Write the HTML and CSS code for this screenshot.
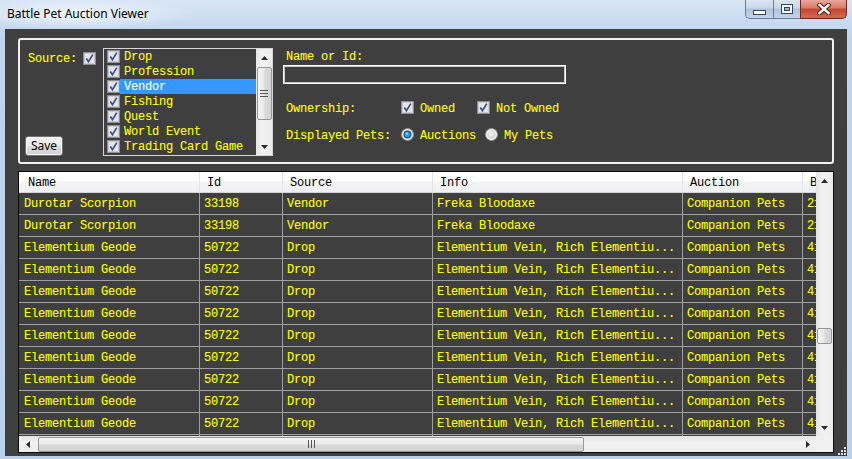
FILE: index.html
```html
<!DOCTYPE html>
<html>
<head>
<meta charset="utf-8">
<title>Battle Pet Auction Viewer</title>
<link rel="stylesheet" href="styles.css">
</head>
<body>
<div class="window">
  <div class="titlebar">
    <div class="title">Battle Pet Auction Viewer</div>
    <div class="controls">
      <div class="cbtn min"><svg width="13" height="5" viewBox="0 0 13 5"><rect x="0.5" y="0.5" width="12" height="4" fill="#fff" stroke="#34465e"/></svg></div>
      <div class="cbtn max"><svg width="12" height="10" viewBox="0 0 12 10"><rect x="0.5" y="0.5" width="11" height="9" fill="#fff" stroke="#34465e"/><rect x="3.5" y="3.5" width="5" height="3" fill="#9fb3cc" stroke="#34465e"/></svg></div>
      <div class="cbtn close"><svg width="14" height="12" viewBox="0 0 14 12"><path d="M2.5 2 L11.5 10 M11.5 2 L2.5 10" stroke="#4a1810" stroke-width="4.4" stroke-linecap="square"/><path d="M2.5 2 L11.5 10 M11.5 2 L2.5 10" stroke="#ffffff" stroke-width="2.4" stroke-linecap="square"/></svg></div>
    </div>
  </div>

  <div class="client">
    <div class="filters">
      <div class="source-col">
        <div class="source-row">
          <span class="lbl">Source:</span>
          <svg class="cb" width="13" height="13" viewBox="0 0 13 13"><rect x="0.5" y="0.5" width="12" height="12" fill="#f4f4f4" stroke="#8e8f8f"/><rect x="1.5" y="1.5" width="10" height="10" fill="#e4e6ea" stroke="#c9ccd2"/><path d="M3.3 6.6 L5.4 9.6 L9.8 2.6" fill="none" stroke="#3b4f8a" stroke-width="1.7"/></svg>
        </div>
        <button class="save">Save</button>
      </div>

      <div class="listbox">
        <ul class="items">
          <li class="item"><svg class="cb" width="13" height="13" viewBox="0 0 13 13"><rect x="0.5" y="0.5" width="12" height="12" fill="#f4f4f4" stroke="#8e8f8f"/><rect x="1.5" y="1.5" width="10" height="10" fill="#e4e6ea" stroke="#c9ccd2"/><path d="M3.3 6.6 L5.4 9.6 L9.8 2.6" fill="none" stroke="#3b4f8a" stroke-width="1.7"/></svg><span>Drop</span></li>
          <li class="item"><svg class="cb" width="13" height="13" viewBox="0 0 13 13"><rect x="0.5" y="0.5" width="12" height="12" fill="#f4f4f4" stroke="#8e8f8f"/><rect x="1.5" y="1.5" width="10" height="10" fill="#e4e6ea" stroke="#c9ccd2"/><path d="M3.3 6.6 L5.4 9.6 L9.8 2.6" fill="none" stroke="#3b4f8a" stroke-width="1.7"/></svg><span>Profession</span></li>
          <li class="item sel"><svg class="cb" width="13" height="13" viewBox="0 0 13 13"><rect x="0.5" y="0.5" width="12" height="12" fill="#f4f4f4" stroke="#8e8f8f"/><rect x="1.5" y="1.5" width="10" height="10" fill="#e4e6ea" stroke="#c9ccd2"/><path d="M3.3 6.6 L5.4 9.6 L9.8 2.6" fill="none" stroke="#3b4f8a" stroke-width="1.7"/></svg><span>Vendor</span></li>
          <li class="item"><svg class="cb" width="13" height="13" viewBox="0 0 13 13"><rect x="0.5" y="0.5" width="12" height="12" fill="#f4f4f4" stroke="#8e8f8f"/><rect x="1.5" y="1.5" width="10" height="10" fill="#e4e6ea" stroke="#c9ccd2"/><path d="M3.3 6.6 L5.4 9.6 L9.8 2.6" fill="none" stroke="#3b4f8a" stroke-width="1.7"/></svg><span>Fishing</span></li>
          <li class="item"><svg class="cb" width="13" height="13" viewBox="0 0 13 13"><rect x="0.5" y="0.5" width="12" height="12" fill="#f4f4f4" stroke="#8e8f8f"/><rect x="1.5" y="1.5" width="10" height="10" fill="#e4e6ea" stroke="#c9ccd2"/><path d="M3.3 6.6 L5.4 9.6 L9.8 2.6" fill="none" stroke="#3b4f8a" stroke-width="1.7"/></svg><span>Quest</span></li>
          <li class="item"><svg class="cb" width="13" height="13" viewBox="0 0 13 13"><rect x="0.5" y="0.5" width="12" height="12" fill="#f4f4f4" stroke="#8e8f8f"/><rect x="1.5" y="1.5" width="10" height="10" fill="#e4e6ea" stroke="#c9ccd2"/><path d="M3.3 6.6 L5.4 9.6 L9.8 2.6" fill="none" stroke="#3b4f8a" stroke-width="1.7"/></svg><span>World Event</span></li>
          <li class="item"><svg class="cb" width="13" height="13" viewBox="0 0 13 13"><rect x="0.5" y="0.5" width="12" height="12" fill="#f4f4f4" stroke="#8e8f8f"/><rect x="1.5" y="1.5" width="10" height="10" fill="#e4e6ea" stroke="#c9ccd2"/><path d="M3.3 6.6 L5.4 9.6 L9.8 2.6" fill="none" stroke="#3b4f8a" stroke-width="1.7"/></svg><span>Trading Card Game</span></li>
        </ul>
        <div class="lscroll">
          <div class="arrow"><svg width="7" height="4" viewBox="0 0 7 4"><path d="M0 4 L3.5 0 L7 4 Z" fill="#2b2b2b"/></svg></div>
          <div class="thumb-v">
            <svg width="8" height="7" viewBox="0 0 8 7"><path d="M0 0.5 H8 M0 3.5 H8 M0 6.5 H8" stroke="#555" stroke-width="1"/></svg>
          </div>
          <div class="spacer"></div>
          <div class="arrow"><svg width="7" height="4" viewBox="0 0 7 4"><path d="M0 0 L3.5 4 L7 0 Z" fill="#2b2b2b"/></svg></div>
        </div>
      </div>

      <div class="right-col">
        <div class="lbl name-lbl">Name or Id:</div>
        <div class="textbox"></div>
        <div class="opt-row first">
          <span class="opt-label">Ownership:</span>
          <svg class="cb" width="13" height="13" viewBox="0 0 13 13"><rect x="0.5" y="0.5" width="12" height="12" fill="#f4f4f4" stroke="#8e8f8f"/><rect x="1.5" y="1.5" width="10" height="10" fill="#e4e6ea" stroke="#c9ccd2"/><path d="M3.3 6.6 L5.4 9.6 L9.8 2.6" fill="none" stroke="#3b4f8a" stroke-width="1.7"/></svg>
          <span class="opt-text">Owned</span>
          <svg class="cb gap-owned" width="13" height="13" viewBox="0 0 13 13"><rect x="0.5" y="0.5" width="12" height="12" fill="#f4f4f4" stroke="#8e8f8f"/><rect x="1.5" y="1.5" width="10" height="10" fill="#e4e6ea" stroke="#c9ccd2"/><path d="M3.3 6.6 L5.4 9.6 L9.8 2.6" fill="none" stroke="#3b4f8a" stroke-width="1.7"/></svg>
          <span class="opt-text">Not Owned</span>
        </div>
        <div class="opt-row second">
          <span class="opt-label">Displayed Pets:</span>
          <svg class="rb" width="13" height="13" viewBox="0 0 13 13"><circle cx="6.5" cy="6.5" r="6" fill="#e9e9e9" stroke="#8e8f8f"/><circle cx="6.5" cy="6.5" r="4" fill="#0f5e9e"/><circle cx="6.5" cy="6.5" r="2.6" fill="#2a9ae0"/><circle cx="5.7" cy="5.6" r="1.1" fill="#bfe6ff"/></svg>
          <span class="opt-text">Auctions</span>
          <svg class="rb gap-auct" width="13" height="13" viewBox="0 0 13 13"><circle cx="6.5" cy="6.5" r="6" fill="#f2f2f2" stroke="#8e8f8f"/><circle cx="6.5" cy="6.5" r="4.2" fill="#d8d8d8"/><circle cx="6" cy="5.8" r="2.6" fill="#ececec"/></svg>
          <span class="opt-text">My Pets</span>
        </div>
      </div>
    </div>

    <div class="grid">
      <div class="view">
        <div class="row head">
          <div class="cell">Name</div><div class="cell">Id</div><div class="cell">Source</div><div class="cell">Info</div><div class="cell">Auction</div><div class="cell">Buyout</div>
        </div>
        <div class="row"><div class="cell">Durotar Scorpion</div><div class="cell">33198</div><div class="cell">Vendor</div><div class="cell">Freka Bloodaxe</div><div class="cell">Companion Pets</div><div class="cell">2100</div></div>
        <div class="row"><div class="cell">Durotar Scorpion</div><div class="cell">33198</div><div class="cell">Vendor</div><div class="cell">Freka Bloodaxe</div><div class="cell">Companion Pets</div><div class="cell">2100</div></div>
        <div class="row"><div class="cell">Elementium Geode</div><div class="cell">50722</div><div class="cell">Drop</div><div class="cell">Elementium Vein, Rich Elementiu...</div><div class="cell">Companion Pets</div><div class="cell">4100</div></div>
        <div class="row"><div class="cell">Elementium Geode</div><div class="cell">50722</div><div class="cell">Drop</div><div class="cell">Elementium Vein, Rich Elementiu...</div><div class="cell">Companion Pets</div><div class="cell">4100</div></div>
        <div class="row"><div class="cell">Elementium Geode</div><div class="cell">50722</div><div class="cell">Drop</div><div class="cell">Elementium Vein, Rich Elementiu...</div><div class="cell">Companion Pets</div><div class="cell">4100</div></div>
        <div class="row"><div class="cell">Elementium Geode</div><div class="cell">50722</div><div class="cell">Drop</div><div class="cell">Elementium Vein, Rich Elementiu...</div><div class="cell">Companion Pets</div><div class="cell">4100</div></div>
        <div class="row"><div class="cell">Elementium Geode</div><div class="cell">50722</div><div class="cell">Drop</div><div class="cell">Elementium Vein, Rich Elementiu...</div><div class="cell">Companion Pets</div><div class="cell">4100</div></div>
        <div class="row"><div class="cell">Elementium Geode</div><div class="cell">50722</div><div class="cell">Drop</div><div class="cell">Elementium Vein, Rich Elementiu...</div><div class="cell">Companion Pets</div><div class="cell">4100</div></div>
        <div class="row"><div class="cell">Elementium Geode</div><div class="cell">50722</div><div class="cell">Drop</div><div class="cell">Elementium Vein, Rich Elementiu...</div><div class="cell">Companion Pets</div><div class="cell">4100</div></div>
        <div class="row"><div class="cell">Elementium Geode</div><div class="cell">50722</div><div class="cell">Drop</div><div class="cell">Elementium Vein, Rich Elementiu...</div><div class="cell">Companion Pets</div><div class="cell">4100</div></div>
        <div class="row"><div class="cell">Elementium Geode</div><div class="cell">50722</div><div class="cell">Drop</div><div class="cell">Elementium Vein, Rich Elementiu...</div><div class="cell">Companion Pets</div><div class="cell">4100</div></div>
        <div class="row"><div class="cell">Elementium Geode</div><div class="cell">50722</div><div class="cell">Drop</div><div class="cell">Elementium Vein, Rich Elementiu...</div><div class="cell">Companion Pets</div><div class="cell">4100</div></div>
      </div>
      <div class="vscroll">
        <div class="arrow"><svg width="7" height="4" viewBox="0 0 7 4"><path d="M0 4 L3.5 0 L7 4 Z" fill="#2b2b2b"/></svg></div>
        <div class="vthumb"></div>
        <div class="spacer"></div>
        <div class="arrow"><svg width="7" height="4" viewBox="0 0 7 4"><path d="M0 0 L3.5 4 L7 0 Z" fill="#2b2b2b"/></svg></div>
      </div>
      <div class="hscroll">
        <div class="harrow"><svg width="4" height="7" viewBox="0 0 4 7"><path d="M4 0 L0 3.5 L4 7 Z" fill="#2b2b2b"/></svg></div>
        <div class="hthumb"><svg width="7" height="8" viewBox="0 0 7 8"><path d="M0.5 0 V8 M3.5 0 V8 M6.5 0 V8" stroke="#555" stroke-width="1"/></svg></div>
        <div class="spacer"></div>
        <div class="harrow"><svg width="4" height="7" viewBox="0 0 4 7"><path d="M0 0 L4 3.5 L0 7 Z" fill="#2b2b2b"/></svg></div>
      </div>
      <div class="corner"></div>
    </div>

    <svg class="grip" width="8" height="8" viewBox="0 0 8 8"><g fill="#dcdcdc"><rect x="6" y="0" width="2" height="2"/><rect x="3" y="3" width="2" height="2"/><rect x="6" y="3" width="2" height="2"/><rect x="0" y="6" width="2" height="2"/><rect x="3" y="6" width="2" height="2"/><rect x="6" y="6" width="2" height="2"/></g></svg>
  </div>
</div>
</body>
</html>
```

FILE: styles.css
```css
* { box-sizing: border-box; margin: 0; padding: 0; }
html, body { width: 852px; height: 459px; overflow: hidden; }
body {
  background: #bdd2ea;
  font-family: "Liberation Mono", "Courier New", monospace;
  font-size: 12px;
  letter-spacing: -0.2px;
  color: #ffff00;
}

.window {
  display: flex;
  flex-direction: column;
  height: 459px;
  background: linear-gradient(to bottom, #cfdff2 0, #c0d5ec 40px, #bbd1ea 100%);
}

/* ---------- title bar ---------- */
.titlebar {
  height: 29px;
  flex: none;
  display: flex;
  align-items: flex-start;
  padding-left: 7px;
  background:
    radial-gradient(ellipse 120px 16px at 78px 14px, rgba(255,255,255,0.7), rgba(255,255,255,0)),
    linear-gradient(to bottom, #d7e5f5, #c3d7ee);
}
.title {
  font-family: "Noto Sans", "Segoe UI", sans-serif;
  font-size: 12px;
  letter-spacing: 0;
  color: #000;
  line-height: 16px;
  margin-top: 6px;
}
.controls {
  margin-left: auto;
  margin-right: 5px;
  display: flex;
}
.cbtn {
  height: 19px;
  display: flex;
  align-items: center;
  justify-content: center;
  border: 1px solid #6a7d96;
  border-top: none;
}
.min {
  width: 28px;
  border-right: none;
  border-radius: 0 0 0 5px;
  background: linear-gradient(to bottom, #dbe6f2, #c8d7e8 45%, #b0c3da 50%, #c4d5e8);
}
.min svg { margin-top: 6px; }
.max {
  width: 27px;
  border-right: none;
  background: linear-gradient(to bottom, #dbe6f2, #c8d7e8 45%, #b0c3da 50%, #c4d5e8);
}
.close {
  width: 47px;
  border-color: #6e2a22;
  border-radius: 0 0 5px 0;
  background: linear-gradient(to bottom, #e9a899, #d77a65 45%, #c4462e 50%, #d66b52);
}

/* ---------- client ---------- */
.client {
  flex: 1;
  margin: 0 5px 3px;
  background: #3f3f3f;
  padding: 9px 13px 3px;
  display: flex;
  flex-direction: column;
  gap: 7px;
  position: relative;
  -webkit-text-stroke: 0.1px currentColor;
}

.filters {
  height: 126px;
  flex: none;
  border: 2px solid #f0f0f0;
  border-radius: 3px;
  display: flex;
}

.lbl { line-height: 13px; }
.cb, .rb { flex: none; display: block; }

.source-col {
  width: 83px;
  flex: none;
  display: flex;
  flex-direction: column;
  justify-content: space-between;
  align-items: flex-start;
  padding: 12px 0 6px 5px;
}
.source-row {
  display: flex;
  align-items: center;
  gap: 6px;
  height: 13px;
  padding-left: 3px;
}
.source-row .lbl { padding-top: 2px; line-height: 13px; }
.save {
  width: 38px;
  height: 20px;
  font-family: "Noto Sans", "Segoe UI", sans-serif;
  font-size: 12px;
  letter-spacing: 0;
  color: #000;
  -webkit-text-stroke: 0;
  border: 1px solid #707070;
  border-radius: 3px;
  background: linear-gradient(to bottom, #f2f2f2 0, #ebebeb 48%, #dddddd 52%, #cfcfcf 100%);
  box-shadow: inset 0 0 0 1px #fbfbfb;
  line-height: 16px;
}

/* ---------- listbox ---------- */
.listbox {
  width: 170px;
  height: 108px;
  margin-top: 8px;
  flex: none;
  border: 1px solid #d6d6d6;
  display: flex;
}
.items {
  list-style: none;
  flex: 1;
  overflow: hidden;
}
.item {
  display: flex;
  align-items: center;
  height: 15px;
  padding-left: 3px;
}
.item span {
  flex: 1;
  height: 15px;
  line-height: 13px;
  padding-top: 2px;
  padding-left: 4px;
  white-space: nowrap;
}
.item.sel span { background: #3399ff; color: #ffffff; }

.lscroll {
  width: 16px;
  flex: none;
  display: flex;
  flex-direction: column;
  align-items: center;
  background: linear-gradient(to right, #e6e6e6, #f2f2f2 40%, #ececec);
}
.arrow {
  height: 17px;
  width: 100%;
  flex: none;
  display: flex;
  align-items: center;
  justify-content: center;
}
.spacer { flex: 1; }
.thumb-v {
  width: 15px;
  height: 53px;
  margin-top: 1px;
  border: 1px solid #979797;
  border-radius: 2px;
  background: linear-gradient(to right, #f5f5f5, #e9e9e9 45%, #d9d9d9 55%, #d2d2d2);
  display: flex;
  align-items: center;
  justify-content: center;
}

/* ---------- right column ---------- */
.right-col {
  margin-left: 10px;
  width: 283px;
  flex: none;
  padding-top: 9px;
}
.name-lbl { padding-left: 3px; padding-top: 2px; }
.textbox {
  height: 19px;
  margin-top: 1px;
  border: 1px solid #ffffff;
  box-shadow: inset 0 0 0 1px #c6c6c6;
}
.opt-row {
  display: flex;
  align-items: center;
  height: 13px;
}
.opt-row.first { margin-top: 17px; }
.opt-row.second { margin-top: 14px; }
.opt-label, .opt-text {
  line-height: 13px;
  padding-top: 4px;
}
.opt-label {
  width: 118px;
  flex: none;
  padding-left: 3px;
}
.opt-text { margin-left: 6px; white-space: nowrap; }
.gap-owned { margin-left: 22px; }
.gap-auct { margin-left: 9px; }

/* ---------- data grid ---------- */
.grid {
  height: 282px;
  flex: none;
  border: 1px solid #0c0c0c;
  display: grid;
  grid-template-columns: 797px 17px;
  grid-template-rows: 264px 16px;
}
.view {
  overflow: hidden;
  background: #3f3f3f;
}
.row {
  display: grid;
  grid-template-columns: 181px 83px 150px 250px 120px 200px;
  height: 22px;
  width: 984px;
}
.cell {
  border-right: 1px solid #a0a0a0;
  border-bottom: 1px solid #a0a0a0;
  padding-left: 4px;
  padding-top: 2px;
  line-height: 19px;
  white-space: nowrap;
  overflow: hidden;
}
.cell:first-child { padding-left: 5px; }
.row.head { height: 21px; }
.head .cell {
  color: #000;
  -webkit-text-stroke: 0;
  background: linear-gradient(to bottom, #ffffff 0, #ffffff 45%, #f2f3f5 50%, #f0f1f3 100%);
  border-right: 1px solid #e2e3e5;
  border-bottom: 1px solid #d5d5d5;
  padding-left: 7px;
  padding-top: 2px;
  line-height: 18px;
}
.head .cell:first-child { padding-left: 9px; }

.vscroll {
  display: flex;
  flex-direction: column;
  align-items: center;
  background: linear-gradient(to right, #e4e4e4, #f2f2f2 40%, #ececec);
}
.vthumb {
  width: 15px;
  height: 16px;
  margin-top: 139px;
  border: 1px solid #979797;
  border-radius: 2px;
  background: linear-gradient(to right, #f5f5f5, #e9e9e9 45%, #d9d9d9 55%, #d2d2d2);
}
.hscroll {
  display: flex;
  align-items: center;
  background: linear-gradient(to bottom, #e4e4e4, #f2f2f2 40%, #ececec);
}
.harrow {
  width: 17px;
  height: 100%;
  flex: none;
  display: flex;
  align-items: center;
  justify-content: center;
}
.hthumb {
  width: 546px;
  height: 15px;
  margin-left: 2px;
  border: 1px solid #979797;
  border-radius: 2px;
  background: linear-gradient(to bottom, #f5f5f5, #e9e9e9 45%, #d9d9d9 55%, #d2d2d2);
  display: flex;
  align-items: center;
  justify-content: center;
}
.corner { background: #f0f0f0; }

.grip {
  position: absolute;
  right: 1px;
  bottom: 1px;
}
```
